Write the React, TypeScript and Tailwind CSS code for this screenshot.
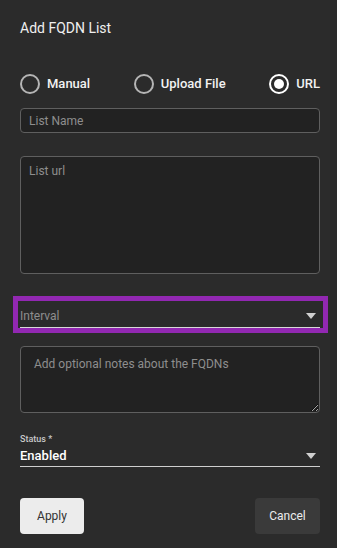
import { useState } from 'react';

type Mode = 'manual' | 'upload' | 'url';

const Radio = ({ checked, label, onClick }: { checked: boolean; label: string; onClick: () => void }) => (
  <button type="button" onClick={onClick} className="flex items-center gap-[7px]">
    <span
      className={`flex h-[20px] w-[20px] items-center justify-center rounded-full border-2 ${
        checked ? 'border-white' : 'border-[#b5b5b5]'
      }`}
    >
      {checked && <span className="h-[10px] w-[10px] rounded-full bg-white" />}
    </span>
    <span className="text-[13px] font-medium text-[#f2f2f2]">{label}</span>
  </button>
);

const Caret = () => (
  <svg width="10" height="6" viewBox="0 0 10 6" className="shrink-0">
    <path d="M0 0h10L5 6z" fill="#d0d0d0" />
  </svg>
);

export default function App() {
  const [mode, setMode] = useState<Mode>('url');

  return (
    <div className="h-[548px] w-[337px] overflow-hidden bg-[#2b2b2b] font-['Roboto',sans-serif]">
      <div className="flex flex-col pl-5 pr-[17px] pt-[19px]">
        {/* Header */}
        <h1 className="text-[14px] leading-[18px] text-[#efefef]">Add FQDN List</h1>

        {/* Source type */}
        <div className="mt-[37px] flex items-center justify-between">
          <Radio checked={mode === 'manual'} label="Manual" onClick={() => setMode('manual')} />
          <Radio checked={mode === 'upload'} label="Upload File" onClick={() => setMode('upload')} />
          <Radio checked={mode === 'url'} label="URL" onClick={() => setMode('url')} />
        </div>

        <input
          placeholder="List Name"
          className="mt-[14px] h-[25px] w-full rounded-[4px] border border-[#5f5f5f] bg-[#222222] px-[8px] text-[12px] text-white outline-none placeholder:text-[#8e8e8e]"
        />

        <textarea
          placeholder="List url"
          className="mt-[23px] h-[118px] w-full resize-none rounded-[4px] border border-[#5f5f5f] bg-[#222222] px-[8px] py-[5px] text-[12px] text-white outline-none placeholder:text-[#8e8e8e]"
        />

        {/* Interval select (highlighted) */}
        <div className="ml-[-7px] mr-[-8px] mt-[22px] h-[37px] border-[5px] border-[#9228b2] pl-[2px] pr-[3px]">
          <div className="flex h-full items-center justify-between border-b border-[#d8d8d8] pr-[4px] pt-[4px]">
            <span className="text-[12px] text-[#8e8e8e]">Interval</span>
            <Caret />
          </div>
        </div>

        <textarea
          placeholder="Add optional notes about the FQDNs"
          className="mt-[13px] h-[67px] w-full rounded-[4px] border border-[#5f5f5f] bg-[#222222] px-[13px] py-[8px] text-[12px] text-white outline-none placeholder:text-[#8e8e8e]"
        />

        {/* Status */}
        <div className="mt-[20px] flex flex-col">
          <span className="text-[9px] font-medium leading-[12px] text-[#c8c8c8]">Status *</span>
          <div className="flex h-[22px] items-center justify-between border-b border-[#cfcfcf] pr-[4px]">
            <span className="text-[13px] font-medium text-white">Enabled</span>
            <Caret />
          </div>
        </div>

        {/* Actions */}
        <div className="mt-[31px] flex justify-between">
          <button className="h-[36px] w-[64px] rounded-[4px] bg-[#ececec] text-[12px] text-[#333333]">Apply</button>
          <button className="h-[36px] w-[65px] rounded-[4px] bg-[#3a3a3a] text-[12px] text-[#ececec]">Cancel</button>
        </div>
      </div>
    </div>
  );
}
